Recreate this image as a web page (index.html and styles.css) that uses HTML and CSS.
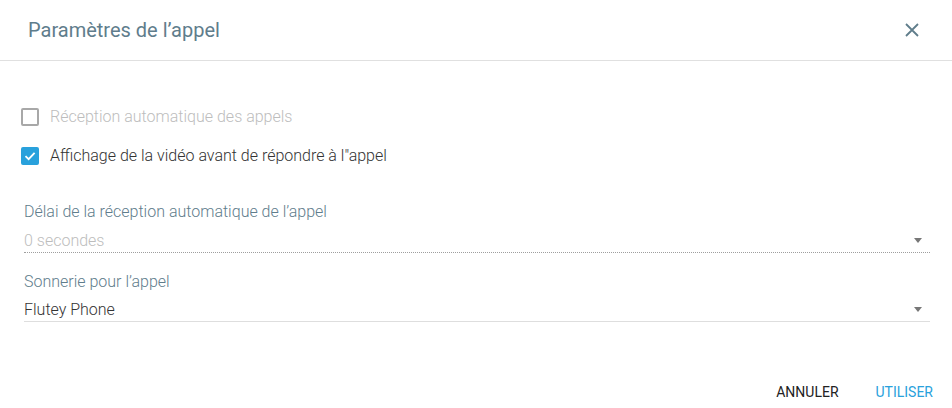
FILE: index.html
```html
<!DOCTYPE html>
<html lang="fr">
  <head>
    <meta charset="UTF-8" />
    <meta name="viewport" content="width=device-width, initial-scale=1.0" />
    <title>Paramètres de l'appel</title>
    <link rel="stylesheet" href="styles.css">
  </head>
  <body>
    <div class="dialog">
      <header class="dialog-header">
        <h1>Paramètres de l’appel</h1>
        <button class="close" aria-label="Fermer">
          <svg width="14" height="14" viewBox="0 0 14 14">
            <path d="M1 1 L13 13 M13 1 L1 13" stroke="#607d8b" stroke-width="1.8" fill="none" />
          </svg>
        </button>
      </header>

      <div class="dialog-body">
        <label class="check disabled">
          <span class="box"></span>
          <span>Réception automatique des appels</span>
        </label>
        <label class="check">
          <span class="box checked">
            <svg width="14" height="14" viewBox="0 0 14 14">
              <path d="M2.5 7.2 L5.6 10.2 L11.6 3.8" stroke="#fff" stroke-width="1.8" fill="none" />
            </svg>
          </span>
          <span>Affichage de la vidéo avant de répondre à l"appel</span>
        </label>

        <div class="field first">
          <div class="field-label">Délai de la réception automatique de l’appel</div>
          <div class="select disabled">
            <span class="value">0 secondes</span>
            <span class="arrow"></span>
          </div>
        </div>

        <div class="field">
          <div class="field-label">Sonnerie pour l’appel</div>
          <div class="select">
            <span class="value">Flutey Phone</span>
            <span class="arrow"></span>
          </div>
        </div>
      </div>

      <footer class="dialog-actions">
        <button class="btn">Annuler</button>
        <button class="btn primary">Utiliser</button>
      </footer>
    </div>
  </body>
</html>
```

FILE: styles.css
```css
body {
  font-family: Roboto, "Noto Sans", Arial, sans-serif;
  font-weight: 300;
  margin: 0;
  padding: 0;
  background: #fff;
}
button {
  font-family: inherit;
  font-weight: inherit;
  background: none;
  border: 0;
  padding: 0;
  cursor: pointer;
}
.dialog {
  width: 952px;
  height: 408px;
  overflow: hidden;
}
.dialog-header {
  height: 60px;
  border-bottom: 1px solid #e0e0e0;
  display: flex;
  align-items: center;
  justify-content: space-between;
  padding: 0 33px 0 28px;
}
.dialog-header h1 {
  margin: 0;
  font-size: 20px;
  font-weight: 400;
  color: #5f7d8c;
}
.close {
  width: 14px;
  height: 14px;
  display: flex;
}
.dialog-body {
  padding: 36px 22px 0 24px;
}
.check {
  display: flex;
  align-items: center;
  height: 39px;
  margin-left: -3px;
  font-size: 16px;
  color: #333;
}
.check.disabled {
  color: #bdbdbd;
}
.box {
  width: 18px;
  height: 18px;
  box-sizing: border-box;
  border: 2px solid #9e9e9e;
  border-radius: 2px;
  margin-right: 11px;
  display: flex;
  align-items: center;
  justify-content: center;
}
.check.disabled .box {
  border-color: #a8a8a8;
}
.box.checked {
  background: #29a1dc;
  border-color: #29a1dc;
}
.field {
  margin-top: 19px;
}
.field.first {
  margin-top: 27px;
}
.field-label {
  font-size: 16px;
  line-height: 20px;
  color: #5f7d8c;
}
.select {
  display: flex;
  align-items: center;
  height: 20px;
  line-height: 20px;
  margin-top: 8px;
  padding-bottom: 1px;
  border-bottom: 1px solid #dedede;
  font-size: 16px;
  color: #333;
}
.select.disabled {
  color: #bdbdbd;
  border-bottom: 1px dotted #9e9e9e;
  margin-top: 9px;
}
.select .value {
  flex: 1;
}
.arrow {
  width: 0;
  height: 0;
  border-left: 4.5px solid transparent;
  border-right: 4.5px solid transparent;
  border-top: 5px solid #777;
  margin-right: 8px;
  margin-top: -2px;
}
.dialog-actions {
  display: flex;
  justify-content: flex-end;
  gap: 37px;
  padding: 0 19px 0 0;
  margin-top: 60px;
}
.btn {
  font-size: 14px;
  font-weight: 400;
  line-height: 20px;
  text-transform: uppercase;
  color: #222;
}
.btn.primary {
  color: #29a1dc;
}
```
